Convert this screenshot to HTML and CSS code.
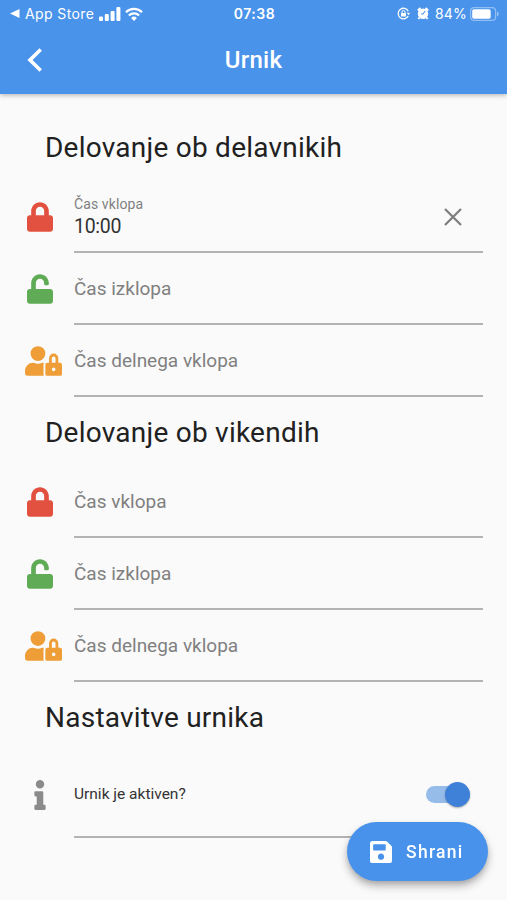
FILE: index.html
```html
<!DOCTYPE html>
<html lang="sl">
<head>
<meta charset="utf-8">
<title>Urnik</title>
<link rel="stylesheet" href="styles.css">
</head>
<body>
<svg class="defs" aria-hidden="true">
  <symbol id="lock" viewBox="0 0 448 512"><path d="M400 224h-24v-72C376 68.2 307.8 0 224 0S72 68.2 72 152v72H48c-26.500 0-48 21.500-48 48v192c0 26.500 21.500 48 48 48h352c26.500 0 48-21.500 48-48V272c0-26.500-21.500-48-48-48zm-104 0H152v-72c0-39.700 32.300-72 72-72s72 32.300 72 72v72z"/></symbol>
  <symbol id="unlock" viewBox="0 0 448 512"><path d="M400 256H152V152.900c0-39.600 31.700-72.500 71.300-72.900 40-.4 72.700 32.100 72.700 72v16c0 13.300 10.700 24 24 24h32c13.300 0 24-10.700 24-24v-16C376 68 307.500-.3 223.500 0 139.500.3 72 69.500 72 153.500V256H48c-26.500 0-48 21.500-48 48v160c0 26.500 21.500 48 48 48h352c26.500 0 48-21.500 48-48V304c0-26.500-21.500-48-48-48z"/></symbol>
  <symbol id="user-lock" viewBox="0 0 640 512"><path d="M224 256A128 128 0 1 0 96 128a128 128 0 0 0 128 128zm96 64a63.080 63.080 0 0 1 8.100-30.500c-4.800-.5-9.500-1.500-14.500-1.500h-16.700a174.080 174.080 0 0 1-145.800 0h-16.700A134.430 134.430 0 0 0 0 422.400V464a48 48 0 0 0 48 48h280.900a63.540 63.540 0 0 1-8.900-32zm288-32h-32v-80a80 80 0 0 0-160 0v80h-32a32 32 0 0 0-32 32v160a32 32 0 0 0 32 32h224a32 32 0 0 0 32-32V320a32 32 0 0 0-32-32zM496 432a32 32 0 1 1 32-32 32 32 0 0 1-32 32zm32-144h-64v-80a32 32 0 0 1 64 0z"/></symbol>
</svg>
<header class="top">
  <div class="status">
    <div class="status-left">
      <svg class="tri" viewBox="0 0 10 9"><path d="M0 4.500L9.500 0v9z"/></svg>
      <span class="store">App Store</span>
      <svg class="signal" viewBox="0 0 22 14"><rect x="0" y="9.500" width="4" height="4.500" rx="1"/><rect x="5.800" y="7" width="4" height="7" rx="1"/><rect x="11.600" y="4" width="4" height="10" rx="1"/><rect x="17.400" y="0" width="4" height="14" rx="1"/></svg>
      <svg class="wifi" viewBox="0 0 18 14"><g fill="none" stroke="#fff" stroke-width="2.300"><path d="M1 5.200a11.300 11.300 0 0 1 16 0"/><path d="M3.900 8.500a7.200 7.200 0 0 1 10.200 0"/></g><path d="M9 14L6.100 11a4.100 4.100 0 0 1 5.800 0z"/></svg>
    </div>
    <span class="clock">07:38</span>
    <div class="status-right">
      <svg class="rotation" viewBox="0 0 13 13"><path d="M11.200 4.100A5.300 5.300 0 1 0 11.200 9" fill="none" stroke="#fff" stroke-width="1.300"/><path d="M9.600 5.800h3.400L11.600 8.300z"/><rect x="4" y="5.900" width="5" height="3.700" rx=".6"/><path d="M5 6.200V5a1.500 1.500 0 0 1 3 0v1.200" fill="none" stroke="#fff"/></svg>
      <svg class="alarm" viewBox="0 0 12 13"><circle cx="6" cy="6.800" r="5.200"/><path d="M.8 3.500L3.500 1M11.200 3.500L8.500 1M2.500 10.500L1.400 12M9.500 10.500l1.100 1.500" stroke="#fff" stroke-width="2"/><path d="M8.200 4L6 7H4" fill="none" stroke="#4a93eb" stroke-width="1.100"/></svg>
      <span class="percent">84%</span>
      <svg class="battery" viewBox="0 0 29 14"><rect x=".6" y=".6" width="25" height="12.800" rx="3.500" fill="none" stroke="#fff" stroke-opacity=".4" stroke-width="1.200"/><rect x="2.200" y="2.200" width="18.500" height="9.600" rx="1.800"/><path d="M27 4.500c2.300.7 2.300 4.300 0 5z" opacity=".45"/></svg>
    </div>
  </div>
  <div class="bar">
    <svg class="back" viewBox="0 0 16 24"><path d="M13.700 1.500L3 12l10.700 10.500" fill="none" stroke="#fff" stroke-width="3.600"/></svg>
    <h1 class="title">Urnik</h1>
  </div>
</header>
<main class="content">
  <section>
    <h2 class="heading">Delovanje ob delavnikih</h2>
    <div class="row"><div class="icon red"><svg class="lock"><use href="#lock"/></svg></div>
      <div class="field filled"><div class="value"><span class="label">Čas vklopa</span><span class="time">10:00</span></div>
      <svg class="clear" viewBox="0 0 18 18"><path d="M1 1l16 16M17 1L1 17" fill="none" stroke="#7d7d7d" stroke-width="2.200"/></svg></div></div>
    <div class="row"><div class="icon green"><svg class="lock"><use href="#unlock"/></svg></div><div class="field">Čas izklopa</div></div>
    <div class="row"><div class="icon orange"><svg class="user"><use href="#user-lock"/></svg></div><div class="field">Čas delnega vklopa</div></div>
  </section>
  <section>
    <h2 class="heading">Delovanje ob vikendih</h2>
    <div class="row"><div class="icon red"><svg class="lock"><use href="#lock"/></svg></div><div class="field">Čas vklopa</div></div>
    <div class="row"><div class="icon green"><svg class="lock"><use href="#unlock"/></svg></div><div class="field">Čas izklopa</div></div>
    <div class="row"><div class="icon orange"><svg class="user"><use href="#user-lock"/></svg></div><div class="field">Čas delnega vklopa</div></div>
  </section>
  <section>
    <h2 class="heading">Nastavitve urnika</h2>
    <div class="row tall"><div class="icon gray"><svg class="info" viewBox="0 0 192 512"><path d="M20 424.229h20V279.771H20c-11.046 0-20-8.954-20-20V212c0-11.046 8.954-20 20-20h112c11.046 0 20 8.954 20 20v212.229h20c11.046 0 20 8.954 20 20V492c0 11.046-8.954 20-20 20H20c-11.046 0-20-8.954-20-20v-47.771c0-11.046 8.954-20 20-20zM96 0C56.235 0 24 32.235 24 72s32.235 72 72 72 72-32.235 72-72S135.764 0 96 0z"/></svg></div>
      <div class="field active"><span>Urnik je aktiven?</span><span class="switch"><span class="knob"></span></span></div></div>
  </section>
</main>
<button class="save" type="button">
  <svg class="disk" viewBox="0 32 448 448"><path d="M433.941 129.941l-83.882-83.882A48 48 0 0 0 316.118 32H48C21.490 32 0 53.490 0 80v352c0 26.510 21.490 48 48 48h352c26.510 0 48-21.490 48-48V163.882a48 48 0 0 0-14.059-33.941zM224 416c-35.346 0-64-28.654-64-64 0-35.346 28.654-64 64-64s64 28.654 64 64c0 35.346-28.654 64-64 64zm96-304.520V212c0 6.627-5.373 12-12 12H76c-6.627 0-12-5.373-12-12V108c0-6.627 5.373-12 12-12h228.520c3.183 0 6.235 1.264 8.485 3.515l3.480 3.480A11.996 11.996 0 0 1 320 111.480z"/></svg>
  <span>Shrani</span>
</button>
</body>
</html>
```
FILE: styles.css
```css
* { box-sizing: border-box; }
body { margin: 0; height: 900px; overflow: hidden; background: #fafafa; color: #212121; font-family: Roboto, "Liberation Sans", sans-serif; }
svg { display: block; flex: none; fill: currentColor; }
.defs { position: absolute; width: 0; height: 0; }
.top { height: 94px; background: #4a93eb; color: #fff; box-shadow: 0 1px 5px rgba(0,0,0,.3); }
.status { display: grid; grid-template-columns: 1fr auto 1fr; align-items: center; height: 27px; padding: 0 8px 0 10px; font-family: Inter, sans-serif; font-size: 14px; }
.status-left, .status-right { display: flex; align-items: center; }
.status-right { justify-content: flex-end; }
.tri { width: 10px; height: 9px; margin-right: 5px; }
.store { letter-spacing: .4px; }
.signal { width: 22px; height: 14px; margin-left: 5px; }
.wifi { width: 18px; height: 14px; margin-left: 4px; }
.clock { font-weight: 600; font-size: 14px; letter-spacing: .5px; }
.rotation { width: 13px; height: 13px; margin-right: 7px; }
.alarm { width: 12px; height: 13px; margin-right: 6px; }
.percent { letter-spacing: .2px; }
.battery { width: 29px; height: 14px; margin-left: 3px; }
.bar { display: grid; grid-template-columns: 60px 1fr 60px; align-items: center; height: 66px; }
.back { width: 16px; height: 24px; margin-left: 27px; }
.title { margin: 0; text-align: center; font-size: 24px; line-height: 30px; font-weight: 500; letter-spacing: .3px; }
.content { padding: 18px 24px 0 25px; }
.heading { margin: 0; height: 69px; padding-left: 20px; font-size: 28px; line-height: 71px; font-weight: 400; letter-spacing: .24px; }
.row { display: flex; height: 72px; }
.row.tall { height: 87px; }
.icon { display: flex; align-items: center; width: 49px; flex: none; }
.lock { width: 26px; height: 30px; margin-left: 2px; }
.user { width: 37px; height: 30px; }
.info { width: 12px; height: 30px; margin-left: 9px; }
.red { color: #e2513f; }
.green { color: #5fab56; }
.orange { color: #ee9d37; }
.gray { color: #8b8b8b; }
.field { display: flex; align-items: center; justify-content: space-between; flex: 1; border-bottom: 2px solid #b3b3b3; color: #808080; font-size: 19px; }
.value { display: flex; flex-direction: column; }
.label { font-size: 14px; line-height: 20px; letter-spacing: .1px; }
.time { color: #333; font-size: 19.500px; line-height: 25px; letter-spacing: -.3px; }
.clear { width: 18px; height: 18px; margin: 2px 21px 0 0; }
.active { color: #333; font-size: 15.500px; }
.switch { display: flex; align-items: center; justify-content: flex-end; width: 44px; height: 17px; margin: 2px 13px 0 0; border-radius: 9px; background: #96bdea; }
.knob { width: 25px; height: 25px; border-radius: 50%; background: #3f80d8; box-shadow: 0 1px 2px rgba(0,0,0,.3); }
.save { position: fixed; right: 19px; bottom: 19px; display: flex; align-items: center; width: 141px; height: 59px; padding: 0 0 0 23px; border: 0; border-radius: 30px; background: #4892eb; color: #fff; font: 500 17.500px Roboto, sans-serif; letter-spacing: 1.300px; box-shadow: 0 5px 9px rgba(0,0,0,.28), 0 2px 4px rgba(0,0,0,.1); }
.disk { width: 22px; height: 22px; margin-right: 14px; }
```
